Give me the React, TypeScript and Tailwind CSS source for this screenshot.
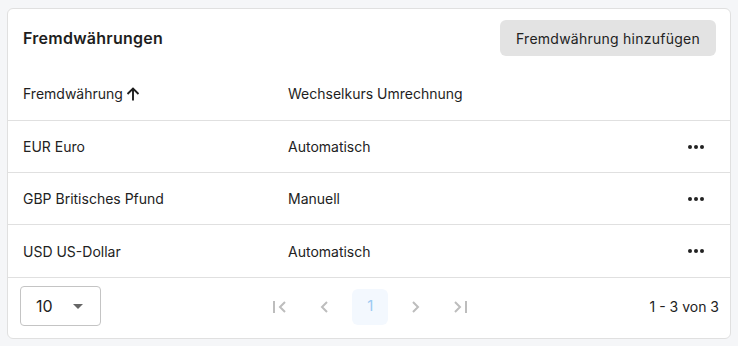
import React from "react";

const rows = [
  { c: "EUR Euro", m: "Automatisch" },
  { c: "GBP Britisches Pfund", m: "Manuell" },
  { c: "USD US-Dollar", m: "Automatisch" },
];

function Dots() {
  return (
    <svg width="18" height="6" viewBox="0 0 18 6">
      <circle cx="3" cy="3" r="2" fill="#222" />
      <circle cx="9" cy="3" r="2" fill="#222" />
      <circle cx="15" cy="3" r="2" fill="#222" />
    </svg>
  );
}

export default function App() {
  return (
    <div className="w-[738px] h-[346px] bg-[#f5f6f8] pt-[8px] pl-[7px]" style={{ fontFamily: "Inter, 'Liberation Sans', sans-serif" }}>
      <div className="w-[724px] h-[331px] bg-white border border-[#e0e0e0] rounded-[6px] flex flex-col overflow-hidden">
        <div className="h-[57px] flex items-center justify-between pl-[15px] pr-[14px] pt-[1px]">
          <div className="text-[16px] font-semibold text-[#1e1e1e] tracking-[0.25px]">Fremdwährungen</div>
          <button className="h-[36px] px-[16px] bg-[#e3e3e3] rounded-[6px] text-[14px] text-[#222] tracking-[0.25px]">Fremdwährung hinzufügen</button>
        </div>
        <div className="h-[55px] flex items-center border-b border-[#e0e0e0] text-[14px] text-[#1e1e1e] pt-[1px]">
          <div className="w-[265px] pl-[15px] flex items-center gap-[2px]">
            Fremdwährung
            <svg width="16" height="16" viewBox="0 0 16 16" fill="none" stroke="#1e1e1e" strokeWidth="1.9">
              <path d="M8 14.5V2.5M2.5 8L8 2.5 13.5 8" />
            </svg>
          </div>
          <div className="pl-[15px]">Wechselkurs Umrechnung</div>
        </div>
        {rows.map((r, i) => (
          <div key={i} className={`flex items-center border-b border-[#e0e0e0] text-[14px] text-[#222] ${i === 2 ? "h-[53px]" : "h-[52px]"}`}>
            <div className="w-[280px] pl-[15px]">{r.c}</div>
            <div className="flex-1">{r.m}</div>
            <div className="pr-[25px] flex items-center"><Dots /></div>
          </div>
        ))}
        <div className="flex-1 flex items-center pl-[12px] pr-[11px] relative">
          <div className="w-[81px] h-[40px] border border-[#c4c4c4] rounded-[4px] flex items-center justify-between pl-[15px] pr-[17px] text-[16px] text-[#222] -mt-[4px]">
            <span>10</span>
            <svg width="10" height="5" viewBox="0 0 10 5"><path d="M0 0h10L5 5z" fill="#666" /></svg>
          </div>
          <div className="flex-1 flex items-center justify-center -mt-[3px] pr-[16px]">
            <div className="w-[48px] h-[36px] flex items-center justify-center">
              <svg width="16" height="16" viewBox="0 0 16 16" fill="none" stroke="#bdbdbd" strokeWidth="2">
                <path d="M2 2v12M13 3L8 8l5 5" />
              </svg>
            </div>
            <div className="w-[48px] h-[36px] flex items-center justify-center pr-[6px]">
              <svg width="16" height="16" viewBox="0 0 16 16" fill="none" stroke="#bdbdbd" strokeWidth="2">
                <path d="M10 3L5 8l5 5" />
              </svg>
            </div>
            <div className="w-[36px] h-[36px] rounded-[6px] bg-[#f3f8fe] flex items-center justify-center text-[15px] text-[#9ccaf2]">1</div>
            <div className="w-[54px] h-[36px] flex items-center justify-center">
              <svg width="16" height="16" viewBox="0 0 16 16" fill="none" stroke="#bdbdbd" strokeWidth="2">
                <path d="M6 3l5 5-5 5" />
              </svg>
            </div>
            <div className="w-[36px] h-[36px] flex items-center justify-center">
              <svg width="16" height="16" viewBox="0 0 16 16" fill="none" stroke="#bdbdbd" strokeWidth="2">
                <path d="M3 3l5 5-5 5M14 2v12" />
              </svg>
            </div>
          </div>
          <div className="text-[14px] text-[#222] -mt-[3px]">1 - 3 von 3</div>
        </div>
      </div>
    </div>
  );
}
